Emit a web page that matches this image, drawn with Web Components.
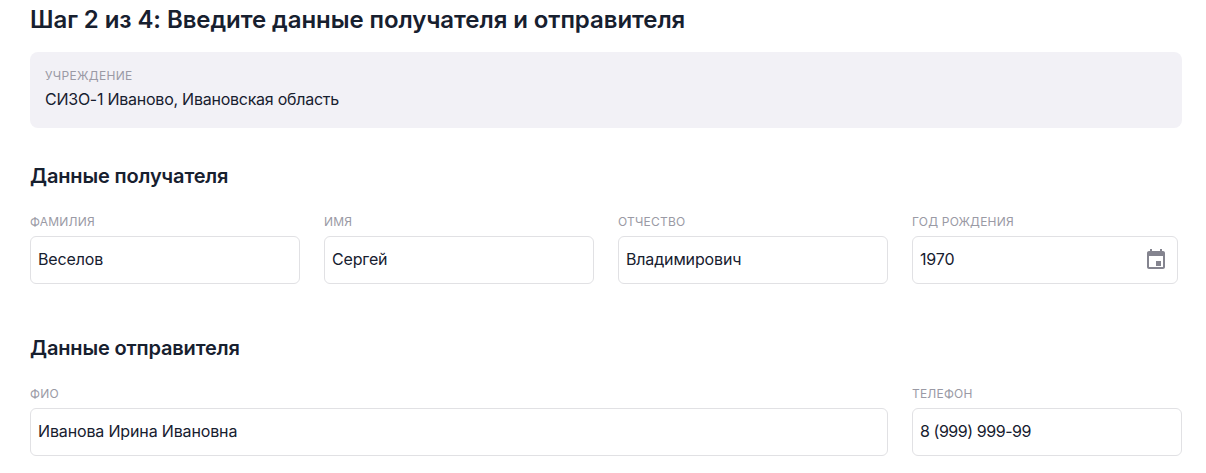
<!DOCTYPE html>
<html lang="ru">
<head>
<meta charset="utf-8">
<title>Шаг 2 из 4</title>
<style>
  html, body { margin: 0; background: #fff; }
  body { font-family: Inter, "Noto Sans", sans-serif; color: #17202f; overflow: hidden; height: 473px; }
</style>
</head>
<body>
<step-form>
  <span slot="title">Шаг 2 из 4: Введите данные получателя и отправителя</span>
  <info-card label="Учреждение">СИЗО-1 Иваново, Ивановская область</info-card>
  <form-section heading="Данные получателя" columns="270px 270px 270px 266px" space-after="52">
    <text-field label="Фамилия">Веселов</text-field>
    <text-field label="Имя">Сергей</text-field>
    <text-field label="Отчество">Владимирович</text-field>
    <text-field label="Год рождения" icon="calendar">1970</text-field>
  </form-section>
  <form-section heading="Данные отправителя" columns="858px 270px">
    <text-field label="ФИО">Иванова Ирина Ивановна</text-field>
    <text-field label="Телефон" style="--field-spacing: -.45px">8 (999) 999-99</text-field>
  </form-section>
</step-form>

<script>
class StepForm extends HTMLElement {
  constructor() {
    super();
    this.attachShadow({mode: 'open'});
    this.shadowRoot.innerHTML = `
      <style>
        :host { display: block; width: 1152px; padding: 5px 24px 0 30px; }
        h1 { margin: 0 0 18px; font-size: 24px; line-height: 29px; font-weight: 600; letter-spacing: -.07px; color: #17202f; }
      </style>
      <h1><slot name="title"></slot></h1>
      <slot></slot>`;
  }
}

class InfoCard extends HTMLElement {
  constructor() {
    super();
    this.attachShadow({mode: 'open'});
  }
  connectedCallback() {
    this.shadowRoot.innerHTML = `
      <style>
        :host { display: block; height: 76px; box-sizing: border-box; padding: 17px 16px 0 15px; background: #f2f1f6; border-radius: 8px; }
        .label { font-size: 12px; line-height: 14px; letter-spacing: .3px; text-transform: uppercase; color: #9a9aa5; }
        .value { margin-top: 6px; font-size: 16px; line-height: 20px; letter-spacing: -.25px; color: #17202f; }
      </style>
      <div class="label">${this.getAttribute('label')}</div>
      <div class="value"><slot></slot></div>`;
  }
}

class FormSection extends HTMLElement {
  constructor() {
    super();
    this.attachShadow({mode: 'open'});
  }
  connectedCallback() {
    let after = this.getAttribute('space-after') || 0
    this.shadowRoot.innerHTML = `
      <style>
        :host { display: block; margin-top: 36px; margin-bottom: ${after}px; }
        h2 { margin: 0 0 27px; font-size: 20px; line-height: 24px; font-weight: 600; letter-spacing: -.15px; color: #17202f; }
        .row { display: grid; grid-template-columns: ${this.getAttribute('columns')}; column-gap: 24px; }
      </style>
      <h2>${this.getAttribute('heading')}</h2>
      <div class="row"><slot></slot></div>`;
  }
}

class TextField extends HTMLElement {
  constructor() {
    super();
    this.attachShadow({mode: 'open'});
  }
  connectedCallback() {
    let icon = this.getAttribute('icon') === 'calendar' ? `
      <svg width="24" height="24" viewBox="0 0 24 24" fill="#84848f">
        <path d="M19 3h-1V1h-2v2H8V1H6v2H5c-1.1 0-2 .9-2 2v14c0 1.1.9 2 2 2h14c1.1 0 2-.9 2-2V5c0-1.1-.9-2-2-2zm0 16H5V8h14v11z"/>
        <path d="M12 13h5v5h-5z"/>
      </svg>` : ''
    this.shadowRoot.innerHTML = `
      <style>
        :host { display: block; }
        .label { font-size: 12px; line-height: 14px; letter-spacing: .2px; text-transform: uppercase; color: #9a9aa5; margin-bottom: 7px; }
        .box { display: flex; align-items: center; justify-content: space-between; box-sizing: border-box; height: 48px; padding: 0 9px 2px 7px; background: #fff; border: 1px solid #e1e1e4; border-radius: 6px; font-size: 16px; letter-spacing: var(--field-spacing, -.15px); color: #17202f; }
        svg { display: block; margin-top: 2px; }
      </style>
      <div class="label">${this.getAttribute('label')}</div>
      <div class="box"><span><slot></slot></span>${icon}</div>`;
  }
}

customElements.define('step-form', StepForm);
customElements.define('info-card', InfoCard);
customElements.define('form-section', FormSection);
customElements.define('text-field', TextField);
</script>
</body>
</html>
